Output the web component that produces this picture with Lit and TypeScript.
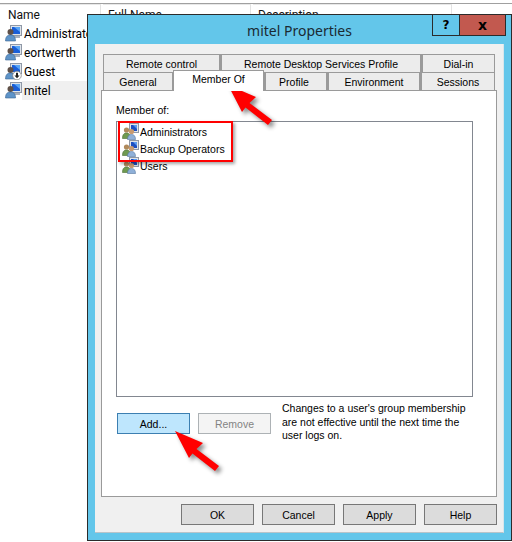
import { LitElement, html, css, svg } from "lit";
import { customElement } from "lit/decorators.js";

const userIcon = (guest = false) => html`<svg class="ico" width="17" height="17" viewBox="0 0 17 17">
  <rect x="5.5" y="0.5" width="11" height="10" fill="#dfe4ea" stroke="#8f98a6"/>
  <rect x="7" y="2" width="8" height="7" fill="#1a5fd8"/>
  <path d="M9 2h6v5z" fill="#58a4f4"/>
  <rect x="8" y="11" width="7" height="2" fill="#a8b0bc"/>
  <circle cx="5.5" cy="7" r="3" fill="#5f5048"/>
  <path d="M0.5 16 C0.5 11.5 2.5 10 5.5 10 C8.5 10 10.5 11.5 10.5 16z" fill="#5f94c8" stroke="#3a6596" stroke-width=".6"/>
  ${guest
    ? svg`<circle cx="12" cy="12.5" r="4.3" fill="#fff" stroke="#777" stroke-width=".7"/>
      <path d="M11 9.8h2v2.7h1.6L12 15.3 9.4 12.5H11z" fill="#222"/>`
    : ""}
</svg>`;

const groupIcon = html`<svg class="ico" width="17" height="17" viewBox="0 0 17 17">
  <rect x="7.5" y="0.5" width="9" height="9" fill="#dfe4ea" stroke="#8f98a6"/>
  <rect x="9" y="2" width="6" height="6" fill="#1c4fc0"/>
  <path d="M11 2h4v4z" fill="#5a9af0"/>
  <circle cx="4.5" cy="7" r="2.6" fill="#b08a5c"/>
  <path d="M0.5 15.5 C0.5 11.5 2 10 4.5 10 C7 10 8.5 11.5 8.5 15.5z" fill="#6f9a50" stroke="#4a6e34" stroke-width=".6"/>
  <circle cx="9.5" cy="8.5" r="2.6" fill="#c89a70"/>
  <path d="M5.5 16.5 C5.5 13 7 11.5 9.5 11.5 C12 11.5 13.5 13 13.5 16.5z" fill="#8fb0d8" stroke="#55779f" stroke-width=".6"/>
</svg>`;

const arrow = (cls: string) => html`<svg class="arrow ${cls}" width="56" height="50" viewBox="0 0 56 50">
  <polygon points="1,1 29,13 22.5,19 45,36 41,41 18.5,23.5 15,28" fill="#ff0000"/>
</svg>`;

const tabsTop = [
  { label: "Remote control", w: 117 },
  { label: "Remote Desktop Services Profile", w: 201 },
  { label: "Dial-in", w: 74 },
];
const tabsBottom = [
  { label: "General", w: 70 },
  { label: "Member Of", w: 91, active: true },
  { label: "Profile", w: 63, shift: 4 },
  { label: "Environment", w: 93 },
  { label: "Sessions", w: 75 },
];

@customElement("app-root")
export class AppRoot extends LitElement {
  static styles = css`
    :host {
      display: block;
      position: relative;
      width: 512px;
      height: 542px;
      overflow: hidden;
      background: #fff;
      font-family: "Liberation Sans", Arial, sans-serif;
      font-size: 10.5px;
      color: #000;
    }
    .back {
      padding-top: 3px;
      font-family: Roboto, sans-serif;
      font-size: 12px;
    }
    .head {
      display: flex;
      box-sizing: border-box;
      height: 21px;
      border-top: 1px solid #a0a0a0;
    }
    .hcell {
      box-sizing: border-box;
      border-right: 1px solid #e3e3e3;
      border-top: 1px solid #e8e8e8;
      padding-left: 8px;
      line-height: 20px;
      margin-right: 2px;
      color: #111;
    }
    .hname { width: 101px; }
    .hfull { width: 148px; padding-left: 5px; }
    .hdesc { width: 199px; padding-left: 5px; }
    .row {
      display: flex;
      align-items: center;
      height: 19px;
      padding-left: 5px;
    }
    .row .ico { flex: none; }
    .row span {
      box-sizing: border-box;
      height: 19px;
      padding: 1px 0 0 2px;
      line-height: 19px;
      flex: 1;
      white-space: nowrap;
    }
    .row.sel span { background: #f0f0f0; }

    .window {
      position: absolute;
      left: 87px;
      top: 14px;
      width: 425px;
      height: 527px;
      box-sizing: border-box;
      background: #63c6ea;
      border: 1px solid #2b2b2b;
      display: flex;
      flex-direction: column;
      padding: 0 7px 7px;
    }
    .caption {
      flex: none;
      height: 29px;
      padding-top: 2px;
      box-sizing: border-box;
      display: flex;
      align-items: center;
      justify-content: center;
      position: relative;
      font-family: "Noto Sans", sans-serif;
      font-size: 14px;
      color: #1a2a33;
    }
    .capbtns {
      position: absolute;
      right: -2px;
      top: 0;
      display: flex;
      height: 21px;
    }
    .capbtn {
      box-sizing: border-box;
      border: 1px solid #2b2b2b;
      border-top: none;
      display: flex;
      align-items: center;
      justify-content: center;
      font-family: "DejaVu Sans", sans-serif;
      font-weight: 700;
      color: #000;
    }
    .help { width: 28px; font-size: 12px; }
    .close { width: 47px; margin-left: -1px; background: #c2594f; font-size: 14px; }

    .client {
      flex: 1;
      box-sizing: border-box;
      background: #f0f0f0;
      padding: 10px 6px 0;
      border-bottom: 1px solid #b8c4ca;
      border-right: 1px solid #d8e6ec;
      display: flex;
      flex-direction: column;
    }
    .tabrow { display: flex; margin-left: 2px; height: 18px; }
    .tab {
      box-sizing: border-box;
      background: #ececec;
      border: 1px solid #9a9a9a;
      border-bottom: none;
      display: flex;
      align-items: center;
      justify-content: center;
      white-space: nowrap;
    }
    .tab + .tab { border-left: 2px solid #9a9a9a; }
    .tab.active {
      background: #fff;
      position: relative;
      z-index: 2;
      height: 21px;
      margin-top: -2px;
      border-left: 1px solid #9a9a9a;
      padding-bottom: 4px;
    }
    .page {
      flex: none;
      height: 407px;
      box-sizing: border-box;
      background: #fff;
      border: 1px solid #9a9a9a;
      padding: 13px 23px 0 14px;
      display: flex;
      flex-direction: column;
    }
    .lbl { line-height: 13px; height: 17px; }
    .list {
      height: 276px;
      box-sizing: border-box;
      border: 1px solid #828790;
      padding: 1px 0 0 5px;
      flex: none;
    }
    .gitem {
      display: flex;
      align-items: center;
      height: 17px;
      gap: 1px;
      white-space: nowrap;
    }
    .bar { display: flex; margin-top: 16px; padding-left: 1px; align-items: flex-start; }
    .btn {
      box-sizing: border-box;
      flex: none;
      width: 73px;
      height: 21px;
      background: #dcdcdc;
      border: 1px solid #777;
      display: flex;
      align-items: center;
      justify-content: center;
      font: inherit;
      color: #000;
      padding: 0;
    }
    .btn.add { background: #bee6fd; border-color: #3c7fb1; }
    .btn.off { background: #f4f4f4; border-color: #adb2b5; color: #838383; margin-left: 8px; }
    .note {
      margin: -11px 0 0 11px;
      line-height: 13.5px;
      white-space: nowrap;
    }
    .foot {
      display: flex;
      justify-content: flex-end;
      gap: 8px;
      margin-top: 7px;
    }

    .redbox {
      position: absolute;
      left: 118px;
      top: 121px;
      width: 115px;
      height: 41px;
      box-sizing: border-box;
      border: 2px solid #f00;
      box-shadow: 2px 2px 3px rgba(0, 0, 0, 0.35);
    }
    .arrow {
      position: absolute;
      filter: drop-shadow(3px 3px 2px rgba(0, 0, 0, 0.45));
    }
    .a1 { left: 227px; top: 84px; }
    .a2 { left: 174px; top: 430px; }
  `;

  render() {
    return html`
      <div class="back">
        <div class="head">
          <div class="hcell hname">Name</div>
          <div class="hcell hfull">Full Name</div>
          <div class="hcell hdesc">Description</div>
        </div>
        <div class="row">${userIcon()}<span>Administrator</span></div>
        <div class="row">${userIcon()}<span>eortwerth</span></div>
        <div class="row">${userIcon(true)}<span>Guest</span></div>
        <div class="row sel">${userIcon()}<span>mitel</span></div>
      </div>

      <div class="window">
        <div class="caption">
          mitel Properties
          <div class="capbtns">
            <div class="capbtn help">?</div>
            <div class="capbtn close">x</div>
          </div>
        </div>
        <div class="client">
          <div class="tabrow">
            ${tabsTop.map((t) => html`<div class="tab" style="width:${t.w}px">${t.label}</div>`)}
          </div>
          <div class="tabrow">
            ${tabsBottom.map(
              (t) => html`<div
                class="tab ${t.active ? "active" : ""}"
                style="width:${t.w}px;padding-right:${t.shift ?? 0}px"
              >
                ${t.label}
              </div>`
            )}
          </div>
          <div class="page">
            <div class="lbl">Member of:</div>
            <div class="list">
              <div class="gitem">${groupIcon}<span>Administrators</span></div>
              <div class="gitem">${groupIcon}<span>Backup Operators</span></div>
              <div class="gitem">${groupIcon}<span>Users</span></div>
            </div>
            <div class="bar">
              <button class="btn add">Add...</button>
              <button class="btn off">Remove</button>
              <div class="note">
                Changes to a user's group membership<br />
                are not effective until the next time the<br />
                user logs on.
              </div>
            </div>
          </div>
          <div class="foot">
            <button class="btn">OK</button>
            <button class="btn">Cancel</button>
            <button class="btn">Apply</button>
            <button class="btn">Help</button>
          </div>
        </div>
      </div>

      <div class="redbox"></div>
      ${arrow("a1")} ${arrow("a2")}
    `;
  }
}
